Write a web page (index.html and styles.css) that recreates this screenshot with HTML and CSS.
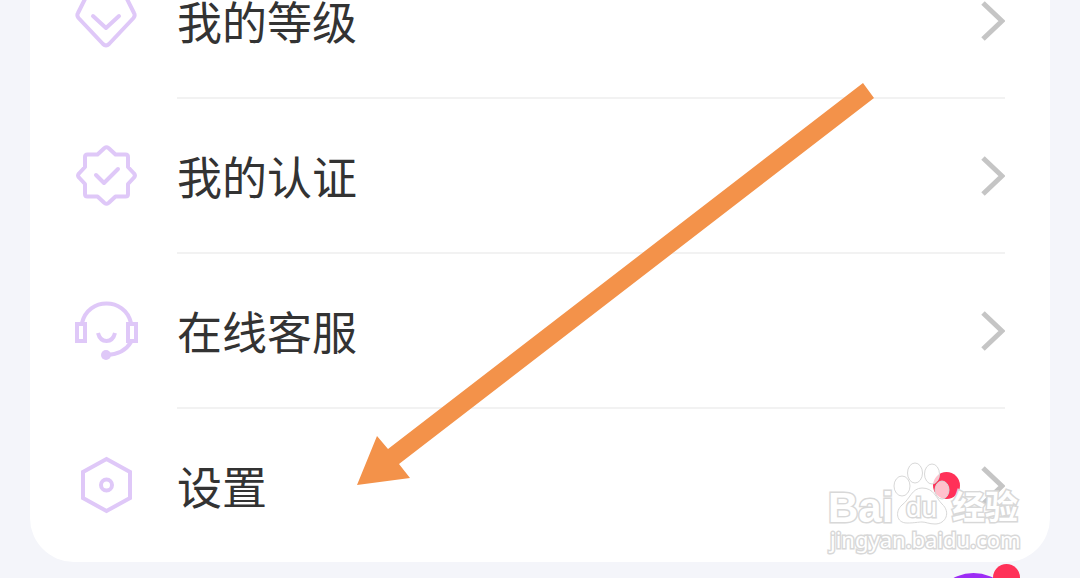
FILE: index.html
```html
<!DOCTYPE html>
<html lang="zh-CN">
<head>
<meta charset="utf-8">
<meta name="viewport" content="width=device-width, initial-scale=1">
<title>设置</title>
<link rel="stylesheet" href="styles.css">
</head>
<body>
<main class="screen">
  <nav class="card">
    <a class="row" href="#level">
      <svg class="icon" viewBox="0 0 64 64" aria-hidden="true"><path d="M18 4h28q4 0 6 4l8 16q1.500 2.500-0.500 5L35 55q-3 3-6 0L4.500 29q-2-2.500-0.500-5l8-16q2-4 6-4z"/><path d="M19 27l13 12 13-12"/></svg>
      <span class="body"><span class="label">我的等级</span><svg class="chevron" viewBox="0 0 24 40" aria-hidden="true"><path d="M2 2l19 18L2 38"/></svg></span>
    </a>
    <a class="row" href="#verify">
      <svg class="icon" viewBox="0 0 64 64" aria-hidden="true"><path d="M30.500 4q2-1.500 4 0l7 6.500h10q2.500 0 2.500 2.500v10l6 6.500q2 2 0 4l-6 6.500v10q0 2.500-2.500 2.500h-10l-7 6.500q-2 1.500-4 0l-7-6.500h-10q-2.500 0-2.500-2.500v-10l-6-6.500q-2-2 0-4l6-6.500v-10q0-2.500 2.500-2.500h10z"/><path d="M22 31l8 8 14-14"/></svg>
      <span class="body"><span class="label">我的认证</span><svg class="chevron" viewBox="0 0 24 40" aria-hidden="true"><path d="M2 2l19 18L2 38"/></svg></span>
    </a>
    <a class="row" href="#service">
      <svg class="icon" viewBox="0 0 64 64" aria-hidden="true"><path class="sharp" d="M3 25h8v17H3zM54 25h8v17h-8zM8 24C14-2 51-2 57 24M57 43Q50 55 33 56"/><path class="sharp" d="M24 34q2 8 8.500 8t8.500-8"/><circle class="dot" cx="32" cy="56" r="5"/></svg>
      <span class="body"><span class="label">在线客服</span><svg class="chevron" viewBox="0 0 24 40" aria-hidden="true"><path d="M2 2l19 18L2 38"/></svg></span>
    </a>
    <a class="row" href="#settings">
      <svg class="icon" viewBox="0 0 64 64" aria-hidden="true"><path class="sharp" d="M32.500 5L56 18v26L32.500 57 9 44V18z"/><circle cx="32.500" cy="31" r="5.500"/></svg>
      <span class="body"><span class="label">设置</span><span class="unread"></span><svg class="chevron" viewBox="0 0 24 40" aria-hidden="true"><path d="M2 2l19 18L2 38"/></svg></span>
    </a>
  </nav>
  <button class="profile" type="button" aria-label="我的"><span class="unread profile-unread"></span></button>
  <svg class="arrow" viewBox="0 0 518 403" aria-hidden="true"><path d="M0 402L20 353l11 13L506 0l11 15L42 381l11 14z"/></svg>
  <svg class="watermark" viewBox="0 0 204 100">
    <text class="brand" x="2" y="62">Bai</text>
    <ellipse cx="76" cy="26" rx="8" ry="10"/>
    <ellipse cx="89" cy="13" rx="7.500" ry="10"/>
    <ellipse cx="106" cy="14" rx="7.500" ry="10"/>
    <ellipse cx="116" cy="30" rx="7" ry="9"/>
    <path d="M81 63C70 63 69 51 76 45C84 39 86 28 96 28C108 28 110 38 116 44C125 52 120 64 109 64C103 64 100 62 96 62S89 63 81 63z"/>
    <text class="du" x="80" y="57">du</text>
    <text class="name" x="126" y="59">经验</text>
    <text class="site" x="4" y="88">jingyan.baidu.com</text>
  </svg>
</main>
</body>
</html>
```
FILE: styles.css
```css
* {
  box-sizing: border-box;
}

body {
  margin: 0;
  background: #f4f5fa;
  font-family: "Noto Sans CJK SC", "Noto Sans", sans-serif;
}

.screen {
  position: relative;
  min-height: 100vh;
  overflow: hidden;
}

.card {
  margin: -56px 30px 16px;
  padding: 0 45px 0 44px;
  border-radius: 44px;
  background: #fff;
}

.row {
  display: flex;
  align-items: flex-start;
  gap: 39px;
  color: #333;
  text-decoration: none;
}

.icon {
  flex: none;
  width: 64px;
  height: 64px;
  margin-top: 45px;
  fill: none;
  stroke: #dfc8f8;
  stroke-width: 4;
  stroke-linecap: round;
  stroke-linejoin: round;
}

.icon .sharp {
  stroke-linecap: butt;
  stroke-linejoin: miter;
}

.icon .dot {
  fill: #dfc8f8;
  stroke: none;
}

.body {
  flex: 1;
  display: flex;
  align-items: center;
  gap: 21px;
  height: 155px;
  border-bottom: 2px solid #f2f2f2;
}

.row:last-child .body {
  height: 153px;
  border-bottom: 0;
}

.label {
  flex: 1;
  font-size: 45px;
  line-height: 64px;
}

.chevron {
  width: 24px;
  height: 40px;
  fill: none;
  stroke: #c5c5c5;
  stroke-width: 5;
}

.unread {
  width: 27px;
  height: 27px;
  border-radius: 50%;
  background: #ff3158;
}

.profile {
  position: absolute;
  right: 64px;
  bottom: -80px;
  width: 85px;
  height: 85px;
  padding: 0;
  border: 0;
  border-radius: 50%;
  background: #9d2cf5;
}

.profile-unread {
  position: absolute;
  top: -9px;
  right: -4px;
}

.arrow {
  position: absolute;
  left: 357px;
  top: 83px;
  width: 518px;
  height: 403px;
  fill: #f3924a;
}

.watermark {
  position: absolute;
  right: 50px;
  top: 460px;
  width: 204px;
  height: 100px;
  fill: rgba(255, 255, 255, 0.7);
  stroke: #d8d8d8;
  stroke-width: 1;
}

.watermark text {
  paint-order: stroke;
  fill: #fff;
  stroke-width: 3;
}

.brand {
  font: bold 42px "Liberation Sans", sans-serif;
}

.du {
  font: 28px "Liberation Sans", sans-serif;
}

.name {
  font: bold 33px "Noto Sans CJK SC", sans-serif;
}

.site {
  font: 22px "Noto Sans", sans-serif;
}
```
